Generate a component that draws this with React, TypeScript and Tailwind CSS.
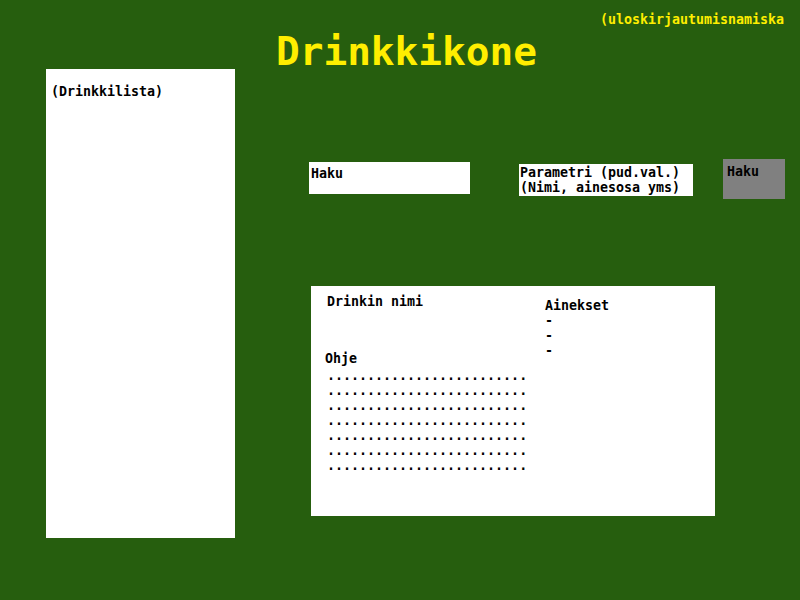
export default function App() {
  const dots = ".........................";
  return (
    <div className="w-[800px] h-[600px] bg-[#265e0e] overflow-hidden font-['DejaVu_Sans_Mono',monospace] font-bold text-[13.3px] leading-[15px] text-black">
      {/* Header */}
      <div className="pt-[12px] pr-[16px] text-right text-[#ffee00]">(uloskirjautumisnamiska</div>
      <h1 className="pl-[276px] mt-[7px] text-[39.4px] leading-[35px] text-[#ffee00]">Drinkkikone</h1>

      <div className="flex items-start">
        {/* Drink list */}
        <div className="ml-[46px] w-[189px] h-[469px] bg-white pt-[15px] pl-[5px]">(Drinkkilista)</div>

        <div className="ml-[74px] flex flex-col">
          {/* Search row */}
          <div className="flex items-start">
            <div className="mt-[93px] w-[161px] h-[32px] bg-white pl-[2px] pt-[4px]">Haku</div>
            <div className="mt-[95px] ml-[49px] w-[174px] h-[32px] bg-white pl-[1px] pt-[1px]">
              <div>Parametri (pud.val.)</div>
              <div>(Nimi, ainesosa yms)</div>
            </div>
            <button className="mt-[90px] ml-[30px] w-[62px] h-[40px] bg-[#808080] text-left pl-[4px] pt-[5px] flex items-start font-bold">
              Haku
            </button>
          </div>

          {/* Drink details */}
          <div className="mt-[87px] ml-[2px] w-[404px] h-[230px] bg-white flex">
            <div className="w-[234px] pl-[14px] pt-[8px]">
              <div className="pl-[2px]">Drinkin nimi</div>
              <div className="mt-[42px]">Ohje</div>
              <div className="mt-[2px] pl-[2px]">
                {Array.from({ length: 7 }).map((_, i) => (
                  <div key={i}>{dots}</div>
                ))}
              </div>
            </div>
            <div className="pt-[12px]">
              <div>Ainekset</div>
              <div>-</div>
              <div>-</div>
              <div>-</div>
            </div>
          </div>
        </div>
      </div>
    </div>
  );
}
